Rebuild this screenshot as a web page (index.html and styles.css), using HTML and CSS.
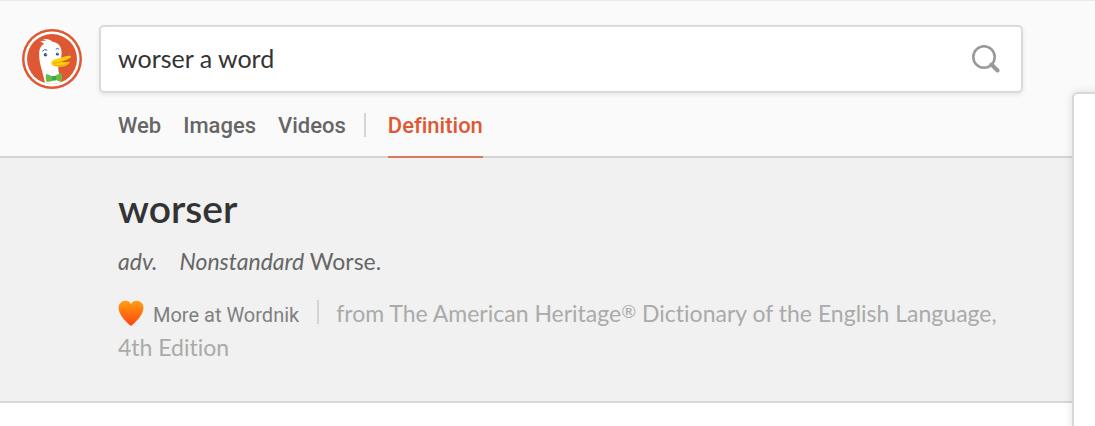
FILE: index.html
```html
<!DOCTYPE html>
<html lang="en">

<head>
    <meta charset="UTF-8">
    <meta name="viewport" content="width=device-width, initial-scale=1.0">
    <title>worser a word at DuckDuckGo</title>
    <link rel="stylesheet" href="styles.css">
</head>

<body>
    <header class="header">
        <div class="search-row">
            <a class="logo" href="#" aria-label="DuckDuckGo">
                <svg viewBox="0 0 60 60" width="60" height="60">
                    <defs>
                        <clipPath id="disc">
                            <circle cx="30" cy="30" r="25" />
                        </clipPath>
                    </defs>
                    <circle cx="30" cy="30" r="30" fill="#de5833" />
                    <circle cx="30" cy="30" r="27.500" fill="#fff" />
                    <circle cx="30" cy="30" r="25" fill="#de5833" />
                    <g clip-path="url(#disc)">
                        <path fill="#fff" d="M23.500 57C22 47 18 37 17.300 29C16.500 22 18 17 22 15C21 13.500 19.500 13 18 13C20 11.500 22.500 11.500 24 12C23 11 22 10.500 20.500 10.500C25 9 29 11 31 13C36 13.500 39 17 39.500 22C40 27 38.500 32 36.500 36C35.500 42 38 48 40 56Z" />
                    </g>
                    <path fill="none" stroke="#3b5ea8" stroke-width="1" stroke-linecap="round" d="M20.500 22Q22.500 19.500 25 21M34 20Q35.500 18.500 37 20" />
                    <circle cx="23.500" cy="25.800" r="1.800" fill="#2d4f8e" />
                    <circle cx="35.500" cy="25" r="1.600" fill="#2d4f8e" />
                    <circle cx="24.200" cy="25.100" r=".6" fill="#fff" />
                    <circle cx="36" cy="24.400" r=".5" fill="#fff" />
                    <path fill="#fdd20a" d="M29.500 33C31 30 35 30 38 29C42 28 46 26 49 27C50 28 46 30.500 41 32C38 33 41 34 46 32.800C48 32.500 48.500 33.500 46.500 35C43 38 36 38.500 32 37C29 36 29 34.500 29.500 33Z" />
                    <path fill="none" stroke="#efa410" stroke-width="1" d="M31 34C34 34.500 37 33 41 32M32 36C36 37.500 42 37 46 34" />
                    <path fill="#67bd47" d="M24 45Q29 46 31 48Q36 45 39.500 44Q40.500 49 39.500 53Q36 52 33 50.500Q29 53 24.500 53Q23 49 24 45Z" />
                    <path fill="#43a347" d="M30 47H34V51.500H30Z" />
                </svg>
            </a>
            <form class="search">
                <input class="search-input" type="text" value="worser a word" aria-label="Search">
                <button class="search-button" type="button" aria-label="Search">
                    <svg viewBox="0 0 28 28" width="28" height="28">
                        <circle cx="12" cy="12" r="10.700" fill="none" stroke="#999" stroke-width="2.600" />
                        <path d="M19.500 19.500L25.500 25.500" stroke="#999" stroke-width="4" stroke-linecap="round" />
                    </svg>
                </button>
            </form>
        </div>
        <nav class="tabs">
            <a class="tab" href="#">Web</a>
            <a class="tab" href="#">Images</a>
            <a class="tab" href="#">Videos</a>
            <span class="divider"></span>
            <a class="tab tab-active" href="#">Definition</a>
        </nav>
    </header>

    <main class="definition">
        <h1 class="word">worser</h1>
        <p class="meaning"><i class="part">adv.</i><i>Nonstandard</i> Worse.</p>
        <p class="source">
            <a class="more" href="#"><svg class="heart" viewBox="0 0 26 26" width="26" height="26">
                    <defs>
                        <linearGradient id="flame" x1="0" y1="0" x2="0" y2="1">
                            <stop offset="0" stop-color="#ffa011" />
                            <stop offset="1" stop-color="#ff4210" />
                        </linearGradient>
                    </defs>
                    <path fill="url(#flame)" d="M13 4C15 -.5 22 -.5 24.500 4C28 11 21 19 13 26C5 19 -2 11 1.500 4C4 -.5 11 -.5 13 4Z" />
                </svg>More at Wordnik</a><span class="divider source-divider"></span>from The American Heritage<sup class="mark">®</sup> Dictionary of the English Language, 4th Edition
        </p>
    </main>

    <aside class="side-panel"></aside>
</body>

</html>
```
FILE: styles.css
```css
* {
    margin: 0;
    padding: 0;
    box-sizing: border-box;
}

body {
    font-family: Lato, "Open Sans", sans-serif;
    font-size: 23px;
    font-variant-ligatures: none;
    background-color: #fff;
    color: #666;
    position: relative;
    min-height: 100vh;
    overflow-x: hidden;
}

a {
    color: inherit;
    text-decoration: none;
}

/* Header */
.header {
    background-color: #fafafa;
    border-top: 1px solid #e8e8e8;
    border-bottom: 2px solid #d4d4d4;
    padding-top: 24px;
}

.search-row {
    display: flex;
    align-items: center;
    gap: 17px;
    padding: 0 72px 0 22px;
}

.logo,
.logo svg {
    display: block;
}

.search {
    display: flex;
    align-items: center;
    flex: 1;
    height: 68px;
    background-color: #fff;
    border: 2px solid #dadada;
    border-radius: 5px;
    box-shadow: 0 2px 5px rgba(0, 0, 0, 0.08);
}

.search-input {
    flex: 1;
    min-width: 0;
    height: 100%;
    padding: 0 17px 3px;
    border: 0;
    outline: 0;
    background: none;
    color: #333;
    font-family: inherit;
    font-size: 25px;
    font-variant-ligatures: none;
}

.search-button {
    display: flex;
    padding: 0 21px;
    border: 0;
    background: none;
    cursor: pointer;
}

.tabs {
    display: flex;
    align-items: center;
    padding-left: 118px;
}

.tab {
    height: 65px;
    margin: 0 22px -2px 0;
    font-family: Roboto, Lato, sans-serif;
    font-size: 22px;
    line-height: 66px;
    font-weight: 500;
}

.tab-active {
    color: #de5833;
    border-bottom: 2px solid #dd7761;
}

.divider {
    width: 2px;
    height: 24px;
    margin: 0 22px 0 -4px;
    background-color: #d4d4d4;
}

/* Definition */
.definition {
    background-color: #f1f1f1;
    border-bottom: 2px solid #d8d8d8;
    padding: 26px 72px 37px 118px;
}

.word {
    color: #333;
    font-size: 39px;
    font-weight: 600;
    line-height: 48px;
}

.meaning {
    margin: 12px 0 18px;
    line-height: 34px;
}

.part {
    margin-right: 22px;
}

.source {
    color: #aaa;
    line-height: 34px;
}

.more {
    color: #808080;
    font-family: Roboto, Lato, sans-serif;
    font-size: 20px;
    line-height: 1;
}

.heart {
    margin-right: 9px;
    vertical-align: -4px;
}

.source-divider {
    display: inline-block;
    margin: 0 17px 0 18px;
    vertical-align: -2px;
}

.mark {
    font-size: 18px;
    line-height: 1;
    vertical-align: 4px;
}

/* Panel over the right edge */
.side-panel {
    position: absolute;
    top: 92px;
    right: -8px;
    bottom: -8px;
    width: 31px;
    background-color: #fff;
    border: 2px solid #d8d8d8;
    border-radius: 6px;
    box-shadow: 0 0 10px rgba(0, 0, 0, 0.12);
}
```
